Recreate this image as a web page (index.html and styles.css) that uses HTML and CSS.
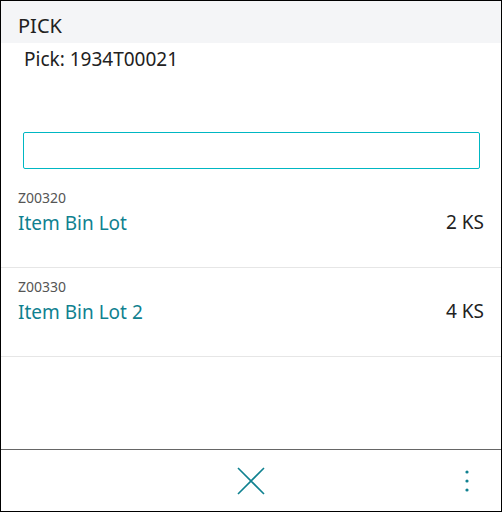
FILE: index.html
```html
<!DOCTYPE html>
<html>
<head>
<meta charset="utf-8">
<link rel="stylesheet" href="styles.css">
</head>
<body>
<div class="app">
  <div class="header">PICK</div>
  <div class="subtitle">Pick: 1934T00021</div>
  <div class="search"><input class="search-input" type="text"></div>
  <div class="list">
    <div class="row">
      <div class="row-main">
        <div class="code">Z00320</div>
        <div class="name">Item Bin Lot</div>
      </div>
      <div class="qty">2 KS</div>
    </div>
    <div class="row">
      <div class="row-main">
        <div class="code">Z00330</div>
        <div class="name">Item Bin Lot 2</div>
      </div>
      <div class="qty">4 KS</div>
    </div>
  </div>
  <div class="footer">
    <svg class="close" width="28" height="28" viewBox="0 0 28 28"><path d="M1 1 L27 27 M27 1 L1 27" stroke="#0f8190" stroke-width="1.6" fill="none"/></svg>
    <svg class="more" width="6" height="24" viewBox="0 0 6 24"><circle cx="3" cy="3" r="1.6" fill="#0f8190"/><circle cx="3" cy="12" r="1.6" fill="#0f8190"/><circle cx="3" cy="21" r="1.6" fill="#0f8190"/></svg>
  </div>
</div>
</body>
</html>
```
FILE: styles.css
```css
* { box-sizing: border-box; }
html, body { margin: 0; padding: 0; background: #fff; }
body { font-family: "Noto Sans", "Open Sans", sans-serif; color: #212121; }
.app {
  width: 502px; height: 512px;
  border: 1px solid #000;
  display: flex; flex-direction: column;
  background: #fff;
}
.header {
  height: 42px;
  background: #f4f5f7;
  padding: 12px 0 0 17px;
  font-size: 20px;
  line-height: 26px;
  color: #212121;
}
.subtitle {
  padding: 3px 0 0 23px;
  font-size: 19px;
  line-height: 26px;
}
.search { padding: 60px 21px 0 22px; }
.search-input {
  display: block;
  width: 100%;
  height: 37px;
  border: 1px solid #00b7c3;
  border-radius: 2px;
  outline: none;
  background: #fff;
}
.list { padding-top: 10px; }
.row {
  height: 89px;
  border-bottom: 1px solid #e6e6e6;
  display: flex;
  justify-content: space-between;
  padding: 10px 17px 0 17px;
}
.code { font-size: 14px; line-height: 18px; color: #555; }
.name { font-size: 19px; line-height: 26px; color: #0f8190; padding-top: 3px; }
.qty { font-size: 19px; line-height: 26px; padding-top: 20px; color: #212121; }
.footer {
  margin-top: auto;
  height: 62px;
  border-top: 1px solid #666;
  position: relative;
  display: flex; align-items: center; justify-content: center;
}
.close { display: block; }
.more { position: absolute; right: 31px; top: 19px; }
```
